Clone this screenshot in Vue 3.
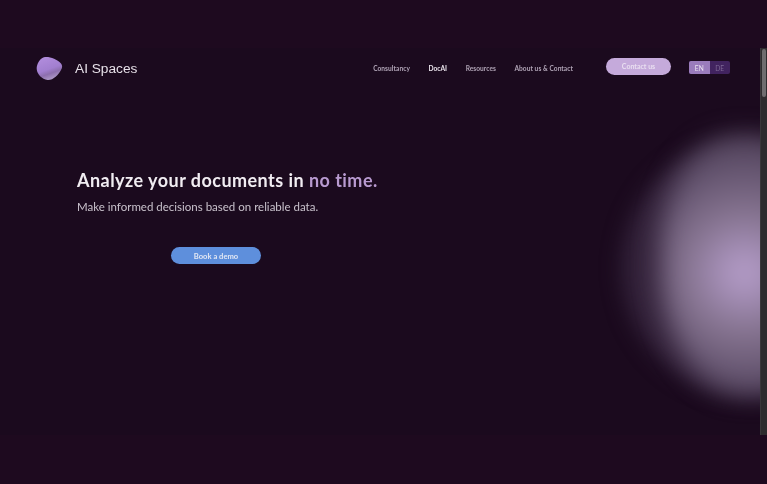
<script setup>
const navLinks = [
  { label: 'Consultancy', active: false },
  { label: 'DocAI', active: true },
  { label: 'Resources', active: false },
  { label: 'About us & Contact', active: false },
];
</script>

<template>
  <div class="page">
    <div class="frame">
      <main class="content">
        <div class="glow"></div>
        <div class="blob"></div>
        <header class="header">
          <a class="brand">
            <svg class="logo" viewBox="0 0 27 25" width="27" height="25">
              <defs>
                <linearGradient id="stone" x1="0" y1="0" x2="0.4" y2="1">
                  <stop offset="0" stop-color="#b48fdf" />
                  <stop offset="0.62" stop-color="#a27fd0" />
                  <stop offset="0.8" stop-color="#8d6fae" />
                  <stop offset="1" stop-color="#a993c4" />
                </linearGradient>
              </defs>
              <path d="M9 1 C14 0.5 21 3 25 7.5 C26.5 9.5 26.5 11.5 25 14 C22.5 19 17 24.5 11.5 24 C6 23.5 1 18 0.7 13 C0.5 8 4 1.8 9 1 Z" fill="url(#stone)" />
            </svg>
            <span class="brand-name">AI Spaces</span>
          </a>
          <nav class="nav">
            <a v-for="link in navLinks" :key="link.label" class="nav-link" :class="{ active: link.active }">{{ link.label }}</a>
          </nav>
          <button class="btn-contact">Contact us</button>
          <div class="lang">
            <span class="lang-item current">EN</span>
            <span class="lang-item">DE</span>
          </div>
        </header>
        <section class="hero">
          <h1>Analyze your documents in <span class="accent">no time.</span></h1>
          <p>Make informed decisions based on reliable data.</p>
          <div class="hero-actions">
            <button class="btn-demo">Book a demo</button>
          </div>
        </section>
      </main>
      <div class="scrollbar"><div class="thumb"></div></div>
    </div>
  </div>
</template>

<style>
html, body { margin: 0; background: #1e0a1f; }
</style>

<style scoped>
.page {
  width: 767px;
  height: 484px;
  box-sizing: border-box;
  padding: 48px 0 49px;
  background: #1e0a1f;
  font-family: Lato, "Open Sans", sans-serif;
  overflow: hidden;
}

.frame {
  display: flex;
  height: 100%;
  background: #1b0a1e;
}

.content {
  position: relative;
  flex: 1;
  overflow: hidden;
}

.glow {
  position: absolute;
  left: 622px;
  top: 92px;
  width: 260px;
  height: 256px;
  border-radius: 50%;
  background: #33223a;
  filter: blur(10px);
}

.blob {
  position: absolute;
  left: 660px;
  top: 88px;
  width: 180px;
  height: 258px;
  border-radius: 46% 54% 50% 50%;
  background: radial-gradient(circle at 47% 53%, #bba2cf 0%, #a58fb7 14%, #85738f 36%, #655570 62%, #4a3c52 90%);
  filter: blur(13px);
}

.header {
  position: relative;
  display: flex;
  align-items: center;
  height: 41px;
  padding: 0 30px 0 36px;
  filter: blur(0.3px);
}

.brand {
  display: flex;
  align-items: center;
  gap: 12px;
  margin-right: auto;
}

.logo {
  display: block;
}

.brand-name {
  font-family: "Liberation Sans", Arial, sans-serif;
  font-size: 13.7px;
  color: #e6e0e8;
}

.nav {
  display: flex;
  gap: 18.5px;
  margin-right: 33px;
}

.nav-link {
  position: relative;
  top: -1px;
  font-size: 6.6px;
  font-weight: 700;
  letter-spacing: 0.05px;
  color: #b0a4b6;
}

.nav-link.active {
  color: #ece6ee;
}

.btn-contact {
  width: 65px;
  height: 17px;
  margin: -4px 18px 0 0;
  padding: 0 0 2px;
  border: none;
  border-radius: 9px;
  background: #c5aadb;
  color: #e9dff0;
  font-family: inherit;
  font-size: 7px;
  font-weight: 700;
}

.lang {
  display: flex;
  width: 41px;
  height: 13px;
  margin-top: -2px;
  border-radius: 2px;
  overflow: hidden;
  background: #41235f;
}

.lang-item {
  flex: 1;
  display: flex;
  align-items: center;
  justify-content: center;
  font-size: 6.6px;
  color: #7d6795;
}

.lang-item.current {
  background: #9a7cbc;
  color: #e9e2f0;
}

.hero {
  position: relative;
  width: 278px;
  margin: 80px 0 0 77px;
  filter: blur(0.3px);
}

h1 {
  margin: 0;
  font-size: 18px;
  line-height: 22px;
  font-weight: 700;
  white-space: nowrap;
  letter-spacing: 0.46px;
  color: #f1edf2;
}

.accent {
  color: #b89ad0;
}

p {
  margin: 8px 0 0;
  font-size: 11.5px;
  line-height: 16px;
  white-space: nowrap;
  color: #c9c2cc;
}

.hero-actions {
  display: flex;
  margin-top: 32px;
  padding-left: 94px;
}

.btn-demo {
  width: 90px;
  height: 17px;
  padding: 0;
  border: none;
  border-radius: 9px;
  background: #5e8fdc;
  color: #e3e8f4;
  font-family: inherit;
  font-size: 7.6px;
  font-weight: 700;
}

.scrollbar {
  position: relative;
  flex: 0 0 7px;
  background: #2e2c2e;
  border-left: 1px solid #3a383a;
  box-sizing: border-box;
}

.thumb {
  width: 4px;
  height: 48px;
  margin: 1px 0 0 1px;
  border-radius: 2px;
  background: #6f6d6f;
}
</style>
